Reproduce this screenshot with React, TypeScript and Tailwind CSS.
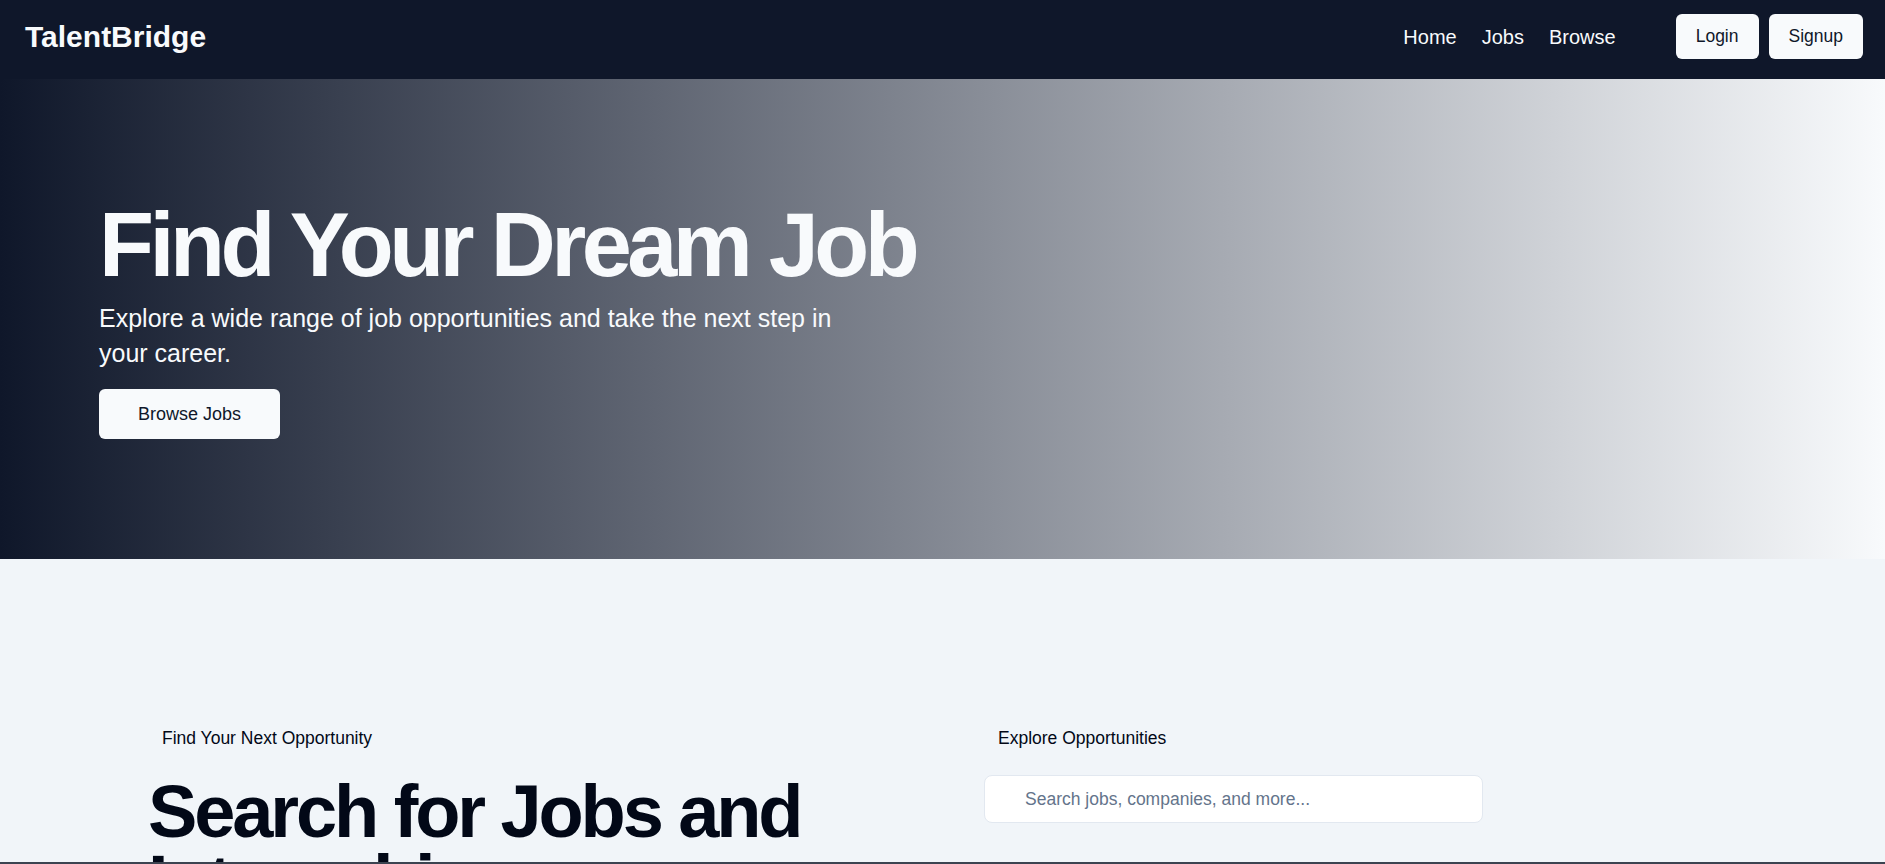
import { useState } from "react";

const navLinks = [
  { label: "Home", href: "#" },
  { label: "Jobs", href: "#" },
  { label: "Browse", href: "#" },
];

function Header() {
  return (
    <header className="bg-[#0f172a] h-[79px] pb-[6px] pl-[25px] pr-[22px] flex items-center justify-between">
      <a href="#" className="text-[30px] font-bold text-[#f8fafc]">
        TalentBridge
      </a>
      <div className="flex items-center">
        <nav className="flex items-center gap-[25px] mr-[60px]">
          {navLinks.map((link) => (
            <a key={link.label} href={link.href} className="text-[20px] text-[#f8fafc]">
              {link.label}
            </a>
          ))}
        </nav>
        <div className="flex items-center gap-[10px]">
          <button className="bg-[#f8fafc] text-[#0f172a] rounded-md px-5 py-[9px] text-[17.5px] leading-[27px]">
            Login
          </button>
          <button className="bg-[#f8fafc] text-[#0f172a] rounded-md px-5 py-[9px] text-[17.5px] leading-[27px]">
            Signup
          </button>
        </div>
      </div>
    </header>
  );
}

function Hero() {
  return (
    <section className="h-[480px] bg-[linear-gradient(to_right,#0f172a,#f8fafc)] px-[99px] flex flex-col justify-center">
      <h1 className="text-[90px] font-bold leading-none tracking-[-0.05em] text-[#f8fafc] mb-[11px]">
        Find Your Dream Job
      </h1>
      <p className="max-w-[760px] text-[25px] leading-[35px] text-[#f8fafc] mb-[18px]">
        Explore a wide range of job opportunities and take the next step in your career.
      </p>
      <div>
        <button className="bg-[#f8fafc] text-[#0f172a] rounded-md px-[39px] py-[11px] text-[18px] leading-[28px]">
          Browse Jobs
        </button>
      </div>
    </section>
  );
}

function SearchSection() {
  const [query, setQuery] = useState("");

  return (
    <section className="bg-[#f1f5f9] pt-[166px] pb-24 pl-[148px] pr-[148px]">
      <div className="flex">
        {/* Left column */}
        <div className="w-[836px] shrink-0">
          <span className="inline-block px-[14px] text-[17.5px] leading-[26px] text-[#020817]">
            Find Your Next Opportunity
          </span>
          <h2 className="mt-[26px] w-[700px] text-[74px] font-bold leading-[70px] tracking-[-0.042em] text-[#020817]">
            Search for Jobs and Internships
          </h2>
        </div>

        {/* Right column */}
        <div className="w-[499px]">
          <span className="inline-block px-[14px] text-[17.5px] leading-[26px] text-[#020817]">
            Explore Opportunities
          </span>
          <div className="mt-[24px]">
            <input
              type="text"
              value={query}
              onChange={(e) => setQuery(e.target.value)}
              placeholder="Search jobs, companies, and more..."
              className="w-full h-[48px] rounded-lg border border-[#e2e8f0] bg-white pl-10 pr-4 text-[17.5px] text-[#020817] placeholder:text-[#64748b] outline-none"
            />
          </div>
        </div>
      </div>
    </section>
  );
}

export default function App() {
  return (
    <div className="min-h-screen bg-[#f1f5f9] font-['Liberation_Sans',Arial,sans-serif]">
      <Header />
      <Hero />
      <SearchSection />
      {/* thin bar along the bottom of the window */}
      <div className="fixed bottom-0 left-0 right-0 h-[2px] bg-[#3b4350]" />
    </div>
  );
}
